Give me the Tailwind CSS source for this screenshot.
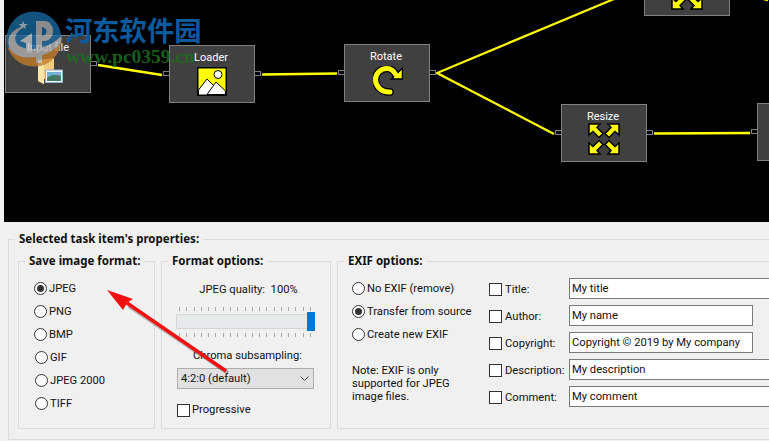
<!doctype html>
<html lang="en">

<head>
  <meta charset="UTF-8">
  <script src="https://cdn.jsdelivr.net/npm/@tailwindcss/browser@4"></script>
  <title>Image task editor</title>
</head>

<body>
  <div class="relative w-[769px] h-[441px] overflow-hidden bg-[#f0f0f0] font-['Roboto',sans-serif] text-[11.2px] leading-[14px] text-[#111]">

    <!-- task canvas -->
    <div class="relative ml-[4px] h-[222px] bg-black overflow-hidden">
      <svg class="absolute left-0 top-0" width="765" height="222" fill="none" stroke="#ffff00" stroke-width="2.500">
        <path d="M94 65L158 75"/>
        <path d="M258 74.5L333 73.5"/>
        <path d="M610 -1L433 73L550 134" stroke-width="2.200"/>
        <path d="M650 133.500L746 133"/>
        <path d="M760 -1L764 0"/>
      </svg>

      <!-- Input file -->
      <div class="absolute left-[1px] top-[35px] w-[86px] h-[58px] flex flex-col items-center border border-[#808080] bg-[#404040] text-white text-[11px]">
        <span class="mt-[5px] text-white/90">Input file</span>
        <svg class="mt-[3px] ml-[4px]" width="26" height="27" viewBox="0 0 26 27">
          <path d="M1 2L17 0V21L7 21L7 26L1 23Z" fill="#f3cd7c"/>
          <path d="M1 2L7 6V26L1 23Z" fill="#fbe6a8"/>
          <rect x="8.500" y="12" width="17" height="12.500" fill="#f4f8fb" stroke="#8fb3cf"/>
          <rect x="10" y="14" width="14" height="9" fill="#6fb0d8"/>
          <path d="M10 20Q15 15 24 18V23H10Z" fill="#3d7a66"/>
        </svg>
        <span class="absolute left-full top-[25px] w-[7px] h-[5px] border border-[#808080] bg-black"></span>
      </div>

      <!-- Loader -->
      <div class="absolute left-[165px] top-[45px] w-[86px] h-[58px] flex flex-col items-center border border-[#808080] bg-[#404040] text-white text-[11px]">
        <span class="mt-[5px] -ml-[2px]">Loader</span>
        <svg class="mt-[2px]" width="30" height="29" viewBox="0 0 30 29">
          <rect x="0.750" y="0.750" width="28.500" height="27.500" fill="#ffff00" stroke="#000" stroke-width="1.500"/>
          <circle cx="21" cy="7.500" r="4" fill="#fff" stroke="#000"/>
          <path d="M1.500 23L10 12L18 20L10 28H1.500Z" fill="#fff" stroke="#000"/>
          <path d="M10 27.500L19 15L28.500 24V27.500Z" fill="#fff" stroke="#000"/>
        </svg>
        <span class="absolute right-full top-[25px] w-[7px] h-[5px] border border-[#808080] bg-black"></span>
        <span class="absolute left-full top-[25px] w-[7px] h-[5px] border border-[#808080] bg-black"></span>
      </div>

      <!-- Rotate -->
      <div class="absolute left-[340px] top-[44px] w-[86px] h-[58px] flex flex-col items-center border border-[#808080] bg-[#404040] text-white text-[11px]">
        <span class="mt-[5px] -ml-[2px]">Rotate</span>
        <svg class="mt-[2px] ml-[1px]" width="30" height="30" viewBox="0 0 30 30" fill="none">
          <path d="M17 26C8 26.500 2.500 20 2.500 13.500C2.500 7 8 2.500 14 2.500C18 2.500 21 5 23 9" stroke="#000" stroke-width="7.500" stroke-linecap="round"/>
          <path d="M29.500 2V13H18.500Z" fill="#ffff00" stroke="#000" stroke-width="1.500"/>
          <path d="M17 26C8 26.500 2.500 20 2.500 13.500C2.500 7 8 2.500 14 2.500C18 2.500 21 5 23 9" stroke="#ffff00" stroke-width="5" stroke-linecap="round"/>
        </svg>
        <span class="absolute right-full top-[25px] w-[7px] h-[5px] border border-[#808080] bg-black"></span>
        <span class="absolute left-full top-[25px] w-[7px] h-[5px] border border-[#808080] bg-black"></span>
      </div>

      <!-- Resize -->
      <div class="absolute left-[557px] top-[104px] w-[86px] h-[58px] flex flex-col items-center border border-[#808080] bg-[#404040] text-white text-[11px]">
        <span class="mt-[5px] -ml-[2px]">Resize</span>
        <svg class="-mt-[1px] -ml-[1px]" width="32" height="32" viewBox="0 0 32 32" fill="#ffff00" stroke="#000" stroke-width="1.500">
          <path d="M1 1H12L9 4.500L15 10.500L11 14.500L5 8.500L1 12Z"/>
          <path d="M31 1H20L23 4.500L17 10.500L21 14.500L27 8.500L31 12Z"/>
          <path d="M1 31H12L9 27.500L15 21.500L11 17.500L5 23.500L1 20Z"/>
          <path d="M31 31H20L23 27.500L17 21.500L21 17.500L27 23.500L31 20Z"/>
        </svg>
        <span class="absolute right-full top-[25px] w-[7px] h-[5px] border border-[#808080] bg-black"></span>
        <span class="absolute left-full top-[25px] w-[7px] h-[5px] border border-[#808080] bg-black"></span>
      </div>

      <!-- top node, cut off by the canvas edge -->
      <div class="absolute left-[640px] -top-[42px] w-[86px] h-[58px] flex flex-col items-center justify-end border border-[#808080] bg-[#404040]">
        <svg class="mb-[5px]" width="32" height="32" viewBox="0 0 32 32" fill="#ffff00" stroke="#000" stroke-width="1.500">
          <path d="M1 31H12L9 27.500L15 21.500L11 17.500L5 23.500L1 20Z"/>
          <path d="M31 31H20L23 27.500L17 21.500L21 17.500L27 23.500L31 20Z"/>
        </svg>
      </div>

      <!-- right node, cut off by the window -->
      <div class="absolute left-[753px] top-[103px] w-[86px] h-[58px] border border-[#808080] bg-[#404040]">
        <span class="absolute right-full top-[25px] w-[7px] h-[5px] border border-[#808080] bg-black"></span>
      </div>
    </div>

    <!-- properties -->
    <div class="relative mt-[17px] ml-[8px] w-[800px] h-[201px] border border-[#dcdcdc]">
      <div class="absolute -top-[8px] left-[6px] px-[4px] bg-[#f0f0f0] font-['Noto_Sans',sans-serif] text-[11.5px] font-bold">Selected task item's properties:</div>

      <div class="flex gap-[6px] pt-[21px] pl-[9px]">
        <!-- save format -->
        <div class="relative w-[137px] h-[168px] border border-[#dcdcdc]">
          <div class="absolute -top-[8px] left-[6px] px-[4px] bg-[#f0f0f0] font-['Noto_Sans',sans-serif] text-[11.5px] font-bold">Save image format:</div>
          <div class="flex flex-col gap-[10px] pt-[20px] pl-[15px]">
            <label class="flex items-center gap-[2px] h-[13px]"><span class="flex items-center justify-center w-[13px] h-[13px] rounded-full border border-[#333] bg-white"><span class="w-[7px] h-[7px] rounded-full bg-[#333]"></span></span>JPEG</label>
            <label class="flex items-center gap-[2px] h-[13px]"><span class="w-[13px] h-[13px] rounded-full border border-[#333] bg-white"></span>PNG</label>
            <label class="flex items-center gap-[2px] h-[13px]"><span class="w-[13px] h-[13px] rounded-full border border-[#333] bg-white"></span>BMP</label>
            <label class="flex items-center gap-[2px] h-[13px] pl-[1px]"><span class="w-[13px] h-[13px] rounded-full border border-[#333] bg-white"></span>GIF</label>
            <label class="flex items-center gap-[2px] h-[13px] pl-[1px]"><span class="w-[13px] h-[13px] rounded-full border border-[#333] bg-white"></span>JPEG 2000</label>
            <label class="flex items-center gap-[2px] h-[13px] pl-[1px]"><span class="w-[13px] h-[13px] rounded-full border border-[#333] bg-white"></span>TIFF</label>
          </div>
        </div>

        <!-- format options -->
        <div class="relative w-[170px] h-[168px] border border-[#dcdcdc]">
          <div class="absolute -top-[8px] left-[6px] px-[4px] bg-[#f0f0f0] font-['Noto_Sans',sans-serif] text-[11.5px] font-bold">Format options:</div>
          <div class="pt-[21px] text-center whitespace-pre pl-[5px]">JPEG quality:  100%</div>
          <!-- slider -->
          <div class="relative mt-[10px] ml-[14px] w-[139px] h-[31px]">
            <div class="absolute left-[3px] top-0 w-[133px] h-[4px] bg-[repeating-linear-gradient(90deg,#aaa_0,#aaa_1px,transparent_1px,transparent_7.28px)]"></div>
            <div class="absolute left-0 top-[7px] w-[139px] h-[15px] border border-[#d6d6d6] bg-[#e7eaea]"></div>
            <div class="absolute right-0 top-[5px] w-[8px] h-[19px] bg-[#0078d7]"></div>
            <div class="absolute left-[3px] top-[26px] w-[133px] h-[4px] bg-[repeating-linear-gradient(90deg,#aaa_0,#aaa_1px,transparent_1px,transparent_7.28px)]"></div>
          </div>
          <div class="mt-[11px] text-center pl-[3px]">Chroma subsampling:</div>
          <div class="mt-[5px] ml-[15px] w-[137px] h-[21px] flex items-center justify-between pl-[3px] pr-[4px] border border-[#adadad] bg-[#e1e1e1]">
            <span>4:2:0 (default)</span>
            <svg width="9" height="6" viewBox="0 0 9 6" fill="none" stroke="#444"><path d="M.5 .5L4.500 4.500L8.500 .5"/></svg>
          </div>
          <label class="flex items-center gap-[2px] mt-[14px] ml-[15px]"><span class="w-[13px] h-[13px] border border-[#333] bg-white"></span>Progressive</label>
        </div>

        <!-- exif -->
        <div class="relative w-[470px] h-[168px] border border-[#dcdcdc]">
          <div class="absolute -top-[8px] left-[6px] px-[4px] bg-[#f0f0f0] font-['Noto_Sans',sans-serif] text-[11.5px] font-bold">EXIF options:</div>
          <div class="flex pt-[16px]">
            <div class="w-[151px] shrink-0 pl-[14px] pt-[4px]">
              <div class="flex flex-col gap-[10px]">
                <label class="flex items-center gap-[2px] h-[13px]"><span class="w-[13px] h-[13px] rounded-full border border-[#333] bg-white"></span>No EXIF (remove)</label>
                <label class="flex items-center gap-[2px] h-[13px]"><span class="flex items-center justify-center w-[13px] h-[13px] rounded-full border border-[#333] bg-white"><span class="w-[7px] h-[7px] rounded-full bg-[#333]"></span></span>Transfer from source</label>
                <label class="flex items-center gap-[2px] h-[13px]"><span class="w-[13px] h-[13px] rounded-full border border-[#333] bg-white"></span>Create new EXIF</label>
              </div>
              <p class="mt-[23px] leading-[13px]">Note: EXIF is only<br>supported for JPEG<br>image files.</p>
            </div>
            <div class="flex flex-col gap-[6px] w-[340px] shrink-0">
              <div class="flex items-center h-[21px]"><span class="shrink-0 w-[13px] h-[13px] mt-[2px] border border-[#333] bg-white"></span><span class="shrink-0 w-[67px] pl-[3px] mt-[2px]">Title:</span><span class="shrink-0 w-[260px] h-[21px] pl-[2px] flex items-center border border-[#7a7a7a] bg-white">My title</span></div>
              <div class="flex items-center h-[21px]"><span class="shrink-0 w-[13px] h-[13px] mt-[2px] border border-[#333] bg-white"></span><span class="shrink-0 w-[67px] pl-[3px] mt-[2px]">Author:</span><span class="shrink-0 w-[184px] h-[21px] pl-[2px] flex items-center border border-[#7a7a7a] bg-white">My name</span></div>
              <div class="flex items-center h-[21px]"><span class="shrink-0 w-[13px] h-[13px] mt-[2px] border border-[#333] bg-white"></span><span class="shrink-0 w-[67px] pl-[3px] mt-[2px]">Copyright:</span><span class="shrink-0 w-[184px] h-[21px] pl-[2px] flex items-center whitespace-nowrap border border-[#7a7a7a] bg-white">Copyright © 2019 by My company</span></div>
              <div class="flex items-center h-[21px]"><span class="shrink-0 w-[13px] h-[13px] mt-[2px] border border-[#333] bg-white"></span><span class="shrink-0 w-[67px] pl-[3px] mt-[2px]">Description:</span><span class="shrink-0 w-[260px] h-[21px] pl-[2px] flex items-center border border-[#7a7a7a] bg-white">My description</span></div>
              <div class="flex items-center h-[21px]"><span class="shrink-0 w-[13px] h-[13px] mt-[2px] border border-[#333] bg-white"></span><span class="shrink-0 w-[67px] pl-[3px] mt-[2px]">Comment:</span><span class="shrink-0 w-[260px] h-[21px] pl-[2px] flex items-center border border-[#7a7a7a] bg-white">My comment</span></div>
            </div>
          </div>
        </div>
      </div>
    </div>

    <!-- red annotation arrow -->
    <svg class="absolute left-0 top-0 pointer-events-none" width="769" height="441">
      <path d="M228 373L129 306" stroke="#000" stroke-opacity=".25" stroke-width="4" fill="none"/>
      <path d="M226 371L127 303" stroke="#f01010" stroke-width="3.500" fill="none"/>
      <path d="M107 290L133 299L127 303L123 310Z" fill="#f01010"/>
    </svg>

    <!-- watermark -->
    <div class="absolute left-[6px] top-[11px] opacity-90">
      <svg class="opacity-85" width="56" height="56" viewBox="0 0 56 56">
        <defs><clipPath id="disc"><circle cx="28" cy="28" r="27.500"/></clipPath></defs>
        <g clip-path="url(#disc)">
          <rect width="56" height="56" fill="#1b6ca4"/>
          <path d="M0 34C10 47 44 47 56 26V56H0Z" fill="#c87c28"/>
          <path d="M4 38C-2 24 10 16 20 15C10 20 6 28 12 34C22 42 44 38 56 24V30C44 48 12 52 4 38Z" fill="#b5b5b5"/>
          <path d="M14 30L26 22V42H20V32Z" fill="#c8c8c8"/>
          <path d="M30 10H38C50 10 50 30 38 30H36V52H30Z" fill="#b5b5b5"/>
          <path d="M36 16V25C42 25 42 16 36 16Z" fill="#1b6ca4"/>
          <path d="M17 10L18.500 13L22 13L19 15L20 18L17 16L14.500 18L15 15L12.500 13L16 13Z" fill="#b5c8d8"/>
        </g>
      </svg>
    </div>
    <div class="absolute left-[65px] top-[11px] font-['Noto_Sans_CJK_SC',sans-serif] font-bold text-[27.300px] leading-[36px] text-[#0b5a9d]">河东软件园</div>
    <div class="absolute left-[66px] top-[46px] font-['Liberation_Serif',serif] font-bold text-[19.500px] leading-[22px] text-[#1c6b1c]/90">www.pc0359.cn</div>
  </div>
</body>

</html>
